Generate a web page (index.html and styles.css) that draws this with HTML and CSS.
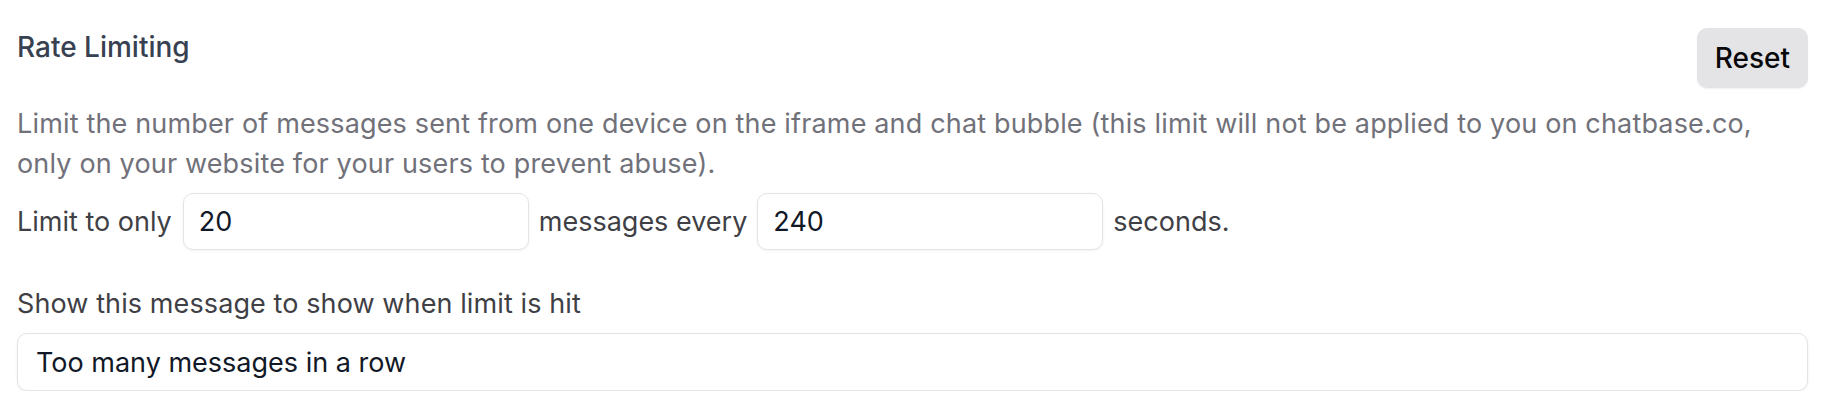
FILE: index.html
```html
<!DOCTYPE html>
<html lang="en">
<head>
<meta charset="utf-8">
<title>Rate Limiting</title>
<link rel="stylesheet" href="styles.css">
</head>
<body>
<section class="section">
  <div class="header">
    <h3 class="title">Rate Limiting</h3>
    <button class="btn" type="button">Reset</button>
  </div>
  <p class="desc">Limit the number of messages sent from one device on the iframe and chat bubble (this limit will not be applied to you on chatbase.co,<br>only on your website for your users to prevent abuse).</p>
  <div class="limit-row">
    <span class="row-text">Limit to only</span>
    <input class="field field-num" type="text" value="20">
    <span class="row-text">messages every</span>
    <input class="field field-num" type="text" value="240">
    <span class="row-text">seconds.</span>
  </div>
  <label class="msg-label" for="msg">Show this message to show when limit is hit</label>
  <input id="msg" class="field field-msg" type="text" value="Too many messages in a row">
</section>
</body>
</html>
```

FILE: styles.css
```css
* { box-sizing: border-box; }

html, body {
  margin: 0;
  background: #ffffff;
}

body {
  font-family: Inter, "Noto Sans", "Liberation Sans", sans-serif;
  padding: 26px 20px 0 17px;
}

.section {
  display: flex;
  flex-direction: column;
}

.header {
  display: flex;
  justify-content: space-between;
  align-items: flex-start;
}

.title {
  margin: 0;
  font-size: 28px;
  line-height: 42px;
  font-weight: 500;
  color: #374151;
}

.btn {
  margin-top: 2px;
  height: 60px;
  padding: 0 18px;
  border: none;
  border-radius: 10px;
  background: #e4e4e7;
  color: #09090b;
  font-family: inherit;
  font-size: 28px;
  font-weight: 500;
  box-shadow: 0 1px 2px rgba(0, 0, 0, 0.06);
}

.desc {
  margin: 16px 0 0;
  font-size: 27px;
  line-height: 40px;
  letter-spacing: 0.16px;
  color: #71717a;
}

.limit-row {
  margin-top: 9px;
  display: flex;
  align-items: center;
  gap: 10px;
  font-size: 27px;
  color: #3f3f46;
}

.row-text:first-child {
  margin-right: 1px;
}

.field {
  border: 1px solid #e4e4e7;
  border-radius: 10px;
  background: #ffffff;
  box-shadow: 0 1px 3px rgba(0, 0, 0, 0.06);
  font-family: inherit;
  font-size: 27px;
  color: #111827;
  outline: none;
}

.field-num {
  width: 346px;
  height: 57px;
  padding: 0 15px;
}

.msg-label {
  margin-top: 33px;
  font-size: 27px;
  line-height: 42px;
  letter-spacing: 0.1px;
  color: #3f3f46;
}

.field-msg {
  margin-top: 8px;
  width: 100%;
  height: 58px;
  padding: 0 18px;
}
```
